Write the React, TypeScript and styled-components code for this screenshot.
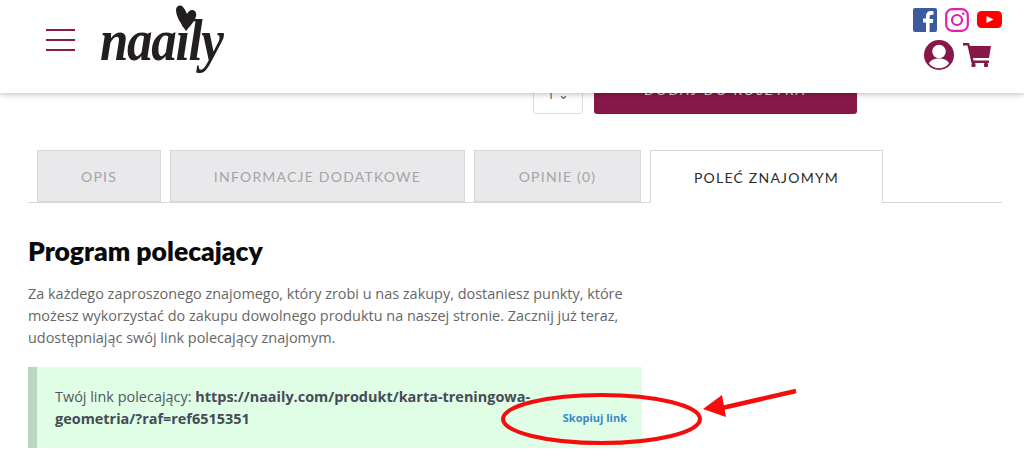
import { createGlobalStyle, styled } from "styled-components";

const GlobalStyle = createGlobalStyle`
  html, body {
    margin: 0;
    padding: 0;
    background: #fff;
  }
  body {
    font-family: "Open Sans", "Liberation Sans", sans-serif;
    overflow: hidden;
  }
`;

const Page = styled.div`
  position: relative;
  width: 1024px;
  height: 470px;
  overflow: hidden;
`;

const Header = styled.header`
  position: absolute;
  inset: 0 0 auto 0;
  z-index: 2;
  height: 93px;
  background: #fff;
  box-shadow: 0 1px 6px rgba(0, 0, 0, 0.28);
`;

const HeaderRow = styled.div`
  display: flex;
  justify-content: space-between;
  height: 100%;
  padding: 0 22px 0 46px;
`;

const Brand = styled.div`
  display: flex;
  align-items: flex-start;
  gap: 25px;
`;

const Burger = styled.div`
  display: flex;
  flex-direction: column;
  gap: 8px;
  width: 29px;
  margin-top: 29px;

  span {
    height: 2px;
    background: #8a1a4b;
  }
`;

const Logo = styled.div`
  position: relative;
  width: 124px;
  height: 75px;
`;

const LogoText = styled.span`
  position: absolute;
  left: 0;
  top: 10px;
  font-family: "Liberation Serif", serif;
  font-style: italic;
  font-weight: 700;
  font-size: 60px;
  line-height: 60px;
  letter-spacing: -1.5px;
  color: #231f20;
  transform: scaleX(0.85);
  transform-origin: left center;
`;

const LogoHeart = styled.svg`
  position: absolute;
  left: 76px;
  top: 5px;
  width: 21px;
  height: 27px;
`;

const IconColumn = styled.div`
  display: flex;
  flex-direction: column;
  align-items: center;
  gap: 8px;
  padding-top: 8px;
`;

const SocialRow = styled.div`
  display: flex;
  align-items: center;
  gap: 8px;
  height: 24px;
`;

const AccountRow = styled.div`
  display: flex;
  align-items: center;
  gap: 9px;
`;

const Main = styled.main`
  padding: 0 22px 0 28px;
`;

const BuyRow = styled.div`
  display: flex;
  align-items: flex-end;
  gap: 11px;
  height: 114px;
  padding-left: 505px;
`;

const QtyBox = styled.div`
  display: flex;
  align-items: center;
  justify-content: center;
  box-sizing: border-box;
  width: 50px;
  height: 40px;
  border: 1px solid #ddd;
  border-radius: 3px;
  font-size: 13px;
  color: #555;
`;

const AddButton = styled.button`
  width: 263px;
  height: 50px;
  border: 0;
  border-radius: 3px;
  background: #871748;
  color: #e9d6df;
  font-family: "Lato", sans-serif;
  font-size: 14px;
  font-style: italic;
  letter-spacing: 2px;
`;

const TabBar = styled.nav`
  display: flex;
  gap: 9px;
  height: 52px;
  margin-top: 36px;
  padding-left: 9px;
  border-bottom: 1px solid #d8d6da;
`;

const Tab = styled.div<{ $active?: boolean; $width: number }>`
  display: flex;
  align-items: center;
  justify-content: center;
  box-sizing: border-box;
  width: ${(p) => p.$width}px;
  height: ${(p) => (p.$active ? "53px" : "52px")};
  border: 1px solid #d8d6da;
  border-bottom: ${(p) => (p.$active ? "0" : "1px solid #d8d6da")};
  background: ${(p) => (p.$active ? "#fff" : "#e9e8ea")};
  color: ${(p) => (p.$active ? "#2c2c2c" : "#a5a5a7")};
  font-family: "Lato", sans-serif;
  font-size: 14px;
  letter-spacing: 1.22px;
`;

const Title = styled.h2`
  margin: 32px 0 0;
  font-family: "Lato", sans-serif;
  font-size: 26.5px;
  line-height: 32px;
  font-weight: 800;
  color: #0a0a0a;
`;

const Lead = styled.p`
  width: 614px;
  margin: 16px 0 0;
  font-size: 14.45px;
  line-height: 22px;
  color: #666;
`;

const Notice = styled.div`
  position: relative;
  box-sizing: border-box;
  width: 614px;
  height: 81px;
  margin-top: 18px;
  padding: 19px 60px 0 18px;
  border-left: 9px solid #b8d8c4;
  background: #e0fde6;
  font-size: 14.45px;
  line-height: 22px;
  color: #515560;

  strong {
    font-weight: 700;
    color: #464b57;
  }
`;

const CopyLink = styled.a`
  position: absolute;
  right: 15px;
  bottom: 23px;
  font-size: 11px;
  line-height: 14px;
  font-weight: 700;
  color: #3b87c9;
`;

const Annotation = styled.svg`
  position: absolute;
  left: 0;
  top: 370px;
  z-index: 1;
  width: 1024px;
  height: 100px;
  pointer-events: none;
`;

export default function App() {
  return (
    <Page>
      <GlobalStyle />
      <Header>
        <HeaderRow>
          <Brand>
            <Burger>
              <span />
              <span />
              <span />
            </Burger>
            <Logo>
              <LogoHeart viewBox="0 0 21 27">
                <path
                  d="M10 26C6 20 0 12 0 5 0 1 4-1 7 2c2 2 3 5 4 7 1-2 3-4 5-4 3 0 5 3 4 6-1 5-6 10-10 15z"
                  fill="#231f20"
                />
              </LogoHeart>
              <LogoText>naaily</LogoText>
            </Logo>
          </Brand>
          <IconColumn>
            <SocialRow>
              <svg width="24" height="24" viewBox="0 0 24 24">
                <rect width="24" height="24" rx="2" fill="#3b5aa0" />
                <path
                  d="M13 24V14.500H10v-4h3V8c0-3.200 2-5 4.800-5 1.300 0 2.400.1 2.700.2v3.500h-2c-1.500 0-1.900.8-1.900 1.900v2.400h3.700l-.5 4h-3.200V24z"
                  fill="#fff"
                />
              </svg>
              <svg width="24" height="24" viewBox="0 0 24 24" fill="none" stroke="#e01fb5">
                <rect x="1.200" y="1.200" width="21.600" height="21.600" rx="6" strokeWidth="2.200" />
                <circle cx="12" cy="12" r="5" strokeWidth="2.200" />
                <circle cx="18.200" cy="5.800" r="1.200" fill="#e01fb5" stroke="none" />
              </svg>
              <svg width="25" height="24" viewBox="0 0 25 24">
                <rect y="3" width="25" height="17" rx="4.500" fill="#ff0000" />
                <path d="M9.500 8l7 3.500-7 3.500z" fill="#fff" />
              </svg>
            </SocialRow>
            <AccountRow>
              <svg width="30" height="30" viewBox="0 0 30 30">
                <circle cx="15" cy="15" r="15" fill="#871748" />
                <circle cx="15" cy="11.500" r="6.800" fill="#fff" />
                <path d="M5 23.500c1.500-3.500 5-5 10-5s8.500 1.500 10 5a12.800 12.800 0 0 1-20 0z" fill="#fff" />
              </svg>
              <svg width="28" height="24" viewBox="0 0 28 24" fill="#871748">
                <path d="M0 0h6l1 3h21l-2 12H10l.5 2.500H26v2.500H8.500L4.500 2.500H0z" />
                <rect x="8.500" y="20" width="4" height="4" rx="1" />
                <rect x="21" y="20" width="4" height="4" rx="1" />
              </svg>
            </AccountRow>
          </IconColumn>
        </HeaderRow>
      </Header>
      <Main>
        <BuyRow>
          <QtyBox>1 ⌄</QtyBox>
          <AddButton>DODAJ DO KOSZYKA</AddButton>
        </BuyRow>
        <TabBar>
          <Tab $width={124}>OPIS</Tab>
          <Tab $width={295}>INFORMACJE DODATKOWE</Tab>
          <Tab $width={167}>OPINIE (0)</Tab>
          <Tab $width={233} $active>
            POLEĆ ZNAJOMYM
          </Tab>
        </TabBar>
        <Title>Program polecający</Title>
        <Lead>
          Za każdego zaproszonego znajomego, który zrobi u nas zakupy, dostaniesz punkty, które możesz wykorzystać do
          zakupu dowolnego produktu na naszej stronie. Zacznij już teraz, udostępniając swój link polecający znajomym.
        </Lead>
        <Notice>
          Twój link polecający: <strong>https://naaily.com/produkt/karta-treningowa-geometria/?raf=ref6515351</strong>
          <CopyLink>Skopiuj link</CopyLink>
        </Notice>
      </Main>
      <Annotation viewBox="0 370 1024 100">
        <ellipse cx="601.500" cy="419" rx="98.500" ry="24" fill="none" stroke="#f50d0d" strokeWidth="4" />
        <path d="M796 391 L722 408" stroke="#f50d0d" strokeWidth="4.500" fill="none" />
        <path d="M703 409 L722 395 L726 417 Z" fill="#f50d0d" />
      </Annotation>
    </Page>
  );
}
